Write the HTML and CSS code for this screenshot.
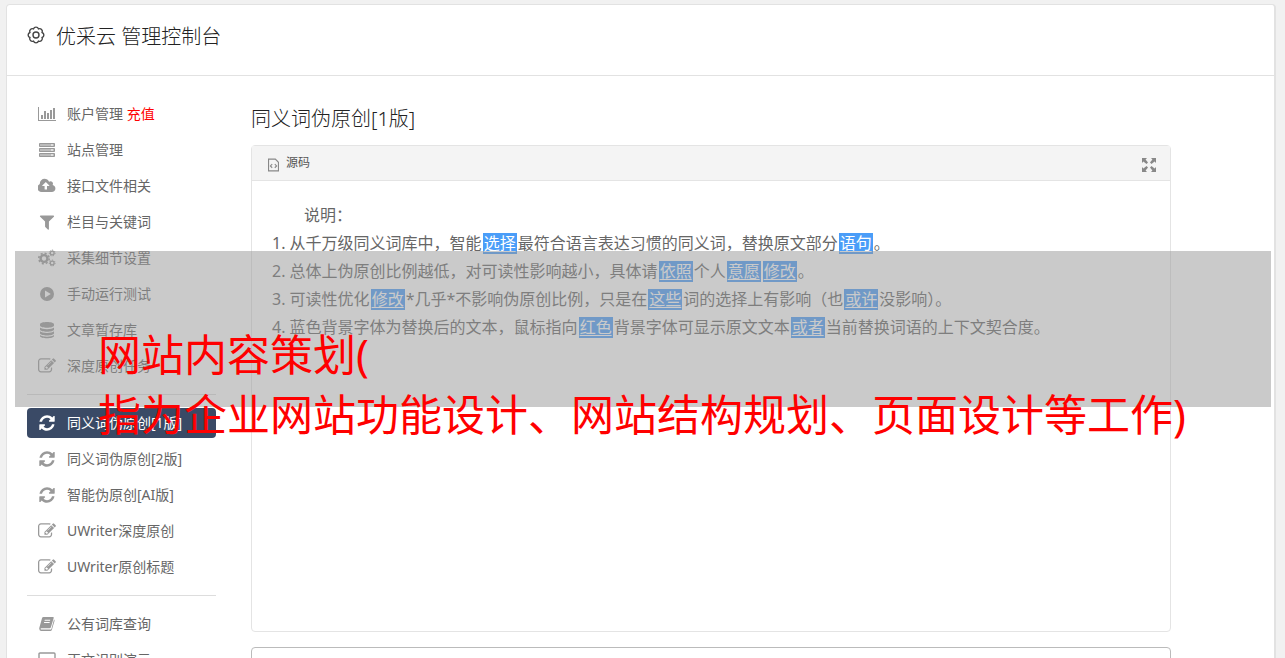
FILE: index.html
```
<!DOCTYPE html>
<html lang="zh-CN">
<head>
<meta charset="utf-8">
<title>优采云 管理控制台</title>
<link rel="stylesheet" href="styles.css">
</head>
<body>
<svg class="sprite" aria-hidden="true">
  <symbol id="i-chart" viewBox="0 0 18 18"><path d="M0 2h1v13h17v1H0zM3 10h2v4H3zM6 6h2v8H6zM9 8h2v6H9zM12 5h2v9h-2zM15 3h2v11h-2z"/></symbol>
  <symbol id="i-server" viewBox="0 0 18 18"><path fill="#bbb" stroke="currentColor" d="M1.500 2.500h15v3h-15zM1.500 7.500h15v3h-15zM1.500 12.500h15v3h-15z"/><path fill="#fff" d="M13 3.500h2v1h-2zM13 8.500h2v1h-2zM13 13.500h2v1h-2z"/></symbol>
  <symbol id="i-cloud" viewBox="0 0 1920 1792"><path d="M1216 864q0-14-9-23l-352-352q-9-9-23-9t-23 9l-351 351q-10 12-10 24 0 14 9 23t23 9h224v352q0 13 9.500 22.500t22.500 9.500h192q13 0 22.500-9.500t9.500-22.500v-352h224q13 0 22.500-9.500t9.500-22.500zm640 288q0 159-112.500 271.500t-271.500 112.500h-1088q-185 0-316.500-131.500t-131.500-316.500q0-130 70-240t188-165q-2-30-2-43 0-212 150-362t362-150q156 0 285.500 87t188.500 231q71-62 166-62 106 0 181 75t75 181q0 76-41 138 130 31 213.500 135.500t83.500 238.500z"/></symbol>
  <symbol id="i-filter" viewBox="0 0 1792 1792"><path d="M1595 295q17 41-14 70l-493 493v742q0 42-39 59-13 5-25 5-27 0-45-19l-256-256q-19-19-19-45v-486l-493-493q-31-29-14-70 17-39 59-39h1280q42 0 59 39z"/></symbol>
  <symbol id="i-cogs" viewBox="0 0 18 18"><g fill="none" stroke="currentColor"><circle cx="6" cy="9.500" r="3.400" stroke-width="2.400"/><circle cx="6" cy="9.500" r="5.200" stroke-width="1.600" stroke-dasharray="2.040 2.040"/><circle cx="14.200" cy="4" r="1.900" stroke-width="1.300"/><circle cx="14.200" cy="4" r="2.900" stroke-width="1" stroke-dasharray="1.300 1.300"/><circle cx="14.200" cy="14" r="1.900" stroke-width="1.300"/><circle cx="14.200" cy="14" r="2.900" stroke-width="1" stroke-dasharray="1.300 1.300"/></g></symbol>
  <symbol id="i-play" viewBox="0 0 18 18"><path fill-rule="evenodd" d="M9 2a7 7 0 1 1 0 14A7 7 0 0 1 9 2zM7 5.500v7l5.800-3.500z"/></symbol>
  <symbol id="i-db" viewBox="0 0 18 18"><path d="M2 3.500C2 .300 16 .300 16 3.500v1C16 7.500 2 7.500 2 4.500zM2 6.500c2.500 2.300 11.500 2.300 14 0v2c0 3-14 3-14 0zM2 10.300c2.500 2.300 11.500 2.300 14 0v2c0 3-14 3-14 0zM2 14c2.500 2.300 11.500 2.300 14 0v1c0 3-14 3-14 0z"/></symbol>
  <symbol id="i-edit" viewBox="0 0 1792 1792"><path d="M888 1184l116-116-152-152-116 116v56h96v96h56zm440-720q-16-16-33 1l-350 350q-17 17-1 33t33-1l350-350q17-17 1-33zm80 594v190q0 119-84.500 203.500t-203.500 84.500h-832q-119 0-203.500-84.500t-84.500-203.500v-832q0-119 84.500-203.500t203.500-84.500h832q63 0 117 25 15 7 18 23 3 17-9 29l-49 49q-14 14-32 8-23-6-45-6h-832q-66 0-113 47t-47 113v832q0 66 47 113t113 47h832q66 0 113-47t47-113v-126q0-13 9-22l64-64q15-15 35-7t20 29zm-96-738l288 288-672 672h-288v-288zm444 132l-92 92-288-288 92-92q28-28 68-28t68 28l152 152q28 28 28 68t-28 68z"/></symbol>
  <symbol id="i-refresh" viewBox="0 0 1792 1792"><path d="M1639 1056q0 5-1 7-64 268-268 434.500t-478 166.500q-146 0-282.500-55t-243.500-157l-129 129q-19 19-45 19t-45-19-19-45v-448q0-26 19-45t45-19h448q26 0 45 19t19 45-19 45l-137 137q71 66 161 102t187 36q134 0 250-65t186-179q11-17 53-117 8-23 30-23h192q13 0 22.500 9.500t9.500 22.500zm25-800v448q0 26-19 45t-45 19h-448q-26 0-45-19t-19-45 19-45l138-138q-148-137-349-137-134 0-250 65t-186 179q-11 17-53 117-8 23-30 23h-199q-13 0-22.500-9.500t-9.500-22.500v-7q65-268 270-434.500t480-166.500q146 0 284 55.500t245 156.500l130-129q19-19 45-19t45 19 19 45z"/></symbol>
  <symbol id="i-book" viewBox="0 0 18 18"><path fill-rule="evenodd" d="M5.500 2H15q1 0 .700 1l-2.800 9.300q-.300 1-1.300 1H3.300q-.900 0-.700.700.200.600 1 .600h9q.600 0 .800-.600L16 4.600q.800.400.500 1.400l-2.700 9q-.400 1-1.500 1H3.200Q1.500 16 1.300 14q-.200-.700.100-1.500L4 3.200Q4.300 2 5.500 2zM6.800 4.800l-.300 1H12l.300-1zM6.200 7l-.300 1h5.600l.300-1z"/></symbol>
  <symbol id="i-desktop" viewBox="0 0 18 18"><path fill="none" stroke="currentColor" stroke-width="1.400" d="M2 2h14q1 0 1 1v8q0 1-1 1H2q-1 0-1-1V3q0-1 1-1zM9 12v3M5 15.500h8"/></symbol>
</svg>

<div class="page">
  <div class="card">
    <header class="top">
      <svg class="gear" viewBox="0 0 18 18" aria-hidden="true"><g fill="none" stroke="currentColor" stroke-width="1.400"><path d="M15.100 11.530A2.700 2.700 0 0 1 11.530 15.100A2.700 2.700 0 0 1 6.470 15.100A2.700 2.700 0 0 1 2.900 11.530A2.700 2.700 0 0 1 2.900 6.470A2.700 2.700 0 0 1 6.470 2.900A2.700 2.700 0 0 1 11.530 2.900A2.700 2.700 0 0 1 15.100 6.470A2.700 2.700 0 0 1 15.100 11.530z"/><circle cx="9" cy="9" r="3"/></g></svg>
      <h1 class="title">优采云 管理控制台</h1>
    </header>
    <div class="body">
      <nav class="menu">
        <a class="item" href="#"><svg class="icon"><use href="#i-chart"/></svg><span>账户管理 <span class="pay">充值</span></span></a>
        <a class="item" href="#"><svg class="icon"><use href="#i-server"/></svg><span>站点管理</span></a>
        <a class="item" href="#"><svg class="icon"><use href="#i-cloud"/></svg><span>接口文件相关</span></a>
        <a class="item" href="#"><svg class="icon"><use href="#i-filter"/></svg><span>栏目与关键词</span></a>
        <a class="item" href="#"><svg class="icon"><use href="#i-cogs"/></svg><span>采集细节设置</span></a>
        <a class="item" href="#"><svg class="icon"><use href="#i-play"/></svg><span>手动运行测试</span></a>
        <a class="item" href="#"><svg class="icon"><use href="#i-db"/></svg><span>文章暂存库</span></a>
        <a class="item" href="#"><svg class="icon"><use href="#i-edit"/></svg><span>深度原创任务</span></a>
        <hr class="rule">
        <a class="item active" href="#"><svg class="icon"><use href="#i-refresh"/></svg><span>同义词伪原创[1版]</span></a>
        <a class="item" href="#"><svg class="icon"><use href="#i-refresh"/></svg><span>同义词伪原创[2版]</span></a>
        <a class="item" href="#"><svg class="icon"><use href="#i-refresh"/></svg><span>智能伪原创[AI版]</span></a>
        <a class="item" href="#"><svg class="icon"><use href="#i-edit"/></svg><span>UWriter深度原创</span></a>
        <a class="item" href="#"><svg class="icon"><use href="#i-edit"/></svg><span>UWriter原创标题</span></a>
        <hr class="rule">
        <a class="item" href="#"><svg class="icon"><use href="#i-book"/></svg><span>公有词库查询</span></a>
        <a class="item" href="#"><svg class="icon"><use href="#i-desktop"/></svg><span>正文识别演示</span></a>
      </nav>
      <main class="main">
        <h2 class="title">同义词伪原创[1版]</h2>
        <section class="editor">
          <div class="toolbar">
            <button class="tool" type="button"><svg class="source" viewBox="0 0 12 14" aria-hidden="true"><path fill="none" stroke="currentColor" stroke-width="1.200" d="M.600.600H8L11.400 4v9.400H.600zM4.600 6L2.600 8l2 2M7.400 6l2 2-2 2"/></svg>源码</button>
            <button class="tool" type="button" aria-label="全屏"><svg class="full" viewBox="0 0 14 14" aria-hidden="true"><path d="M0 0h5L3.600 1.400 6 4.500 4.500 6 1.400 3.600 0 5zM14 0v5l-1.400-1.400L9.500 6 8 4.500l2.400-3.100L9 0zM0 14V9l1.400 1.400L4.500 8 6 9.500l-2.400 3.100L5 14zM14 14H9l1.400-1.400L8 9.500 9.500 8l3.100 2.400L14 9z"/></svg></button>
          </div>
          <div class="content">
            <p class="lead">说明：</p>
            <ol class="notes">
              <li>从千万级同义词库中，智能<u class="word">选择</u>最符合语言表达习惯的同义词，替换原文部分<u class="word">语句</u>。</li>
              <li>总体上伪原创比例越低，对可读性影响越小，具体请<u class="word">依照</u>个人<u class="word">意愿</u><u class="word">修改</u>。</li>
              <li>可读性优化<u class="word">修改</u>*几乎*不影响伪原创比例，只是在<u class="word">这些</u>词的选择上有影响（也<u class="word">或许</u>没影响）。</li>
              <li>蓝色背景字体为替换后的文本，鼠标指向<u class="word">红色</u>背景字体可显示原文文本<u class="word">或者</u>当前替换词语的上下文契合度。</li>
            </ol>
          </div>
        </section>
        <textarea class="result" aria-label="结果"></textarea>
      </main>
    </div>
  </div>
  <div class="banner">
    <p class="caption">网站内容策划(<br>指为企业网站功能设计、网站结构规划、页面设计等工作)</p>
  </div>
</div>
</body>
</html>
```
FILE: styles.css
```
* { box-sizing: border-box; }
body {
  margin: 0;
  background: #f1f1f1;
  color: #666;
  font: 14px/20px "Noto Sans", "Noto Sans CJK SC", sans-serif;
}
h1, h2, p, ol { margin: 0; padding: 0; }
.sprite { position: absolute; width: 0; height: 0; }
.page {
  position: relative;
  height: 100vh;
  overflow: hidden;
  padding: 4px 9px 0 6px;
}
.card {
  min-height: 100%;
  background: #fff;
  border: 1px solid #e2e2e2;
  border-right-width: 2px;
  border-radius: 4px;
}
.top {
  display: flex;
  align-items: flex-start;
  gap: 11px;
  padding: 16px 20px 22px;
  border-bottom: 1px solid #e2e2e2;
}
.gear { width: 18px; height: 18px; margin-top: 5px; color: #444; }
.title { font-size: 20px; line-height: 32px; font-weight: 300; color: #222; }
.body {
  display: grid;
  grid-template-columns: 189px minmax(0, 1fr);
  gap: 35px;
  padding: 23px 103px 0 20px;
}
.menu { display: flex; flex-direction: column; }
.item {
  display: flex;
  align-items: center;
  gap: 11px;
  height: 30px;
  margin-bottom: 6px;
  padding: 0 11px;
  border-radius: 4px;
  color: #666;
  text-decoration: none;
  white-space: nowrap;
}
.icon { width: 18px; height: 18px; fill: currentColor; color: #999; }
.pay { color: #f00; }
.active, .active .icon { color: #fff; }
.active { background: #3a4a66; }
.rule {
  width: 100%;
  margin: 7px 0 13px;
  border: 0;
  border-top: 1px solid #ddd;
}
.main { padding-top: 4px; }
.editor {
  min-height: 487px;
  margin-top: 10px;
  border: 1px solid #e4e4e4;
  border-radius: 4px;
}
.toolbar {
  display: flex;
  justify-content: space-between;
  align-items: center;
  height: 35px;
  padding: 0 14px 0 16px;
  background: #f4f4f4;
  border-bottom: 1px solid #e4e4e4;
}
.tool {
  display: flex;
  align-items: center;
  gap: 7px;
  padding: 0;
  border: 0;
  background: none;
  color: #555;
  font: 12px/22px "Noto Sans", "Noto Sans CJK SC", sans-serif;
}
.tool svg { color: #888; margin-top: 4px; }
.source { width: 11px; height: 14px; }
.full { width: 14px; height: 14px; fill: currentColor; }
.content {
  padding: 20px;
  font-size: 16px;
  line-height: 28px;
}
.lead { text-indent: 2em; }
.notes { list-style-position: inside; }
.word {
  display: inline-block;
  height: 21px;
  margin: 0 1px;
  padding: 0 1px;
  background: #4a9df8;
  color: #fff;
  line-height: 21px;
  text-underline-offset: 2px;
}
.result {
  display: block;
  width: 100%;
  height: 120px;
  margin-top: 15px;
  border: 1px solid #bbb;
  border-radius: 4px;
  resize: none;
}
.banner {
  position: absolute;
  top: 251px;
  left: 15px;
  right: 14px;
  height: 156px;
  padding: 74px 0 0 83px;
  background: rgba(150, 150, 150, 0.5);
}
.caption {
  color: #f00;
  font-size: 43px;
  line-height: 60px;
  white-space: nowrap;
}
```
